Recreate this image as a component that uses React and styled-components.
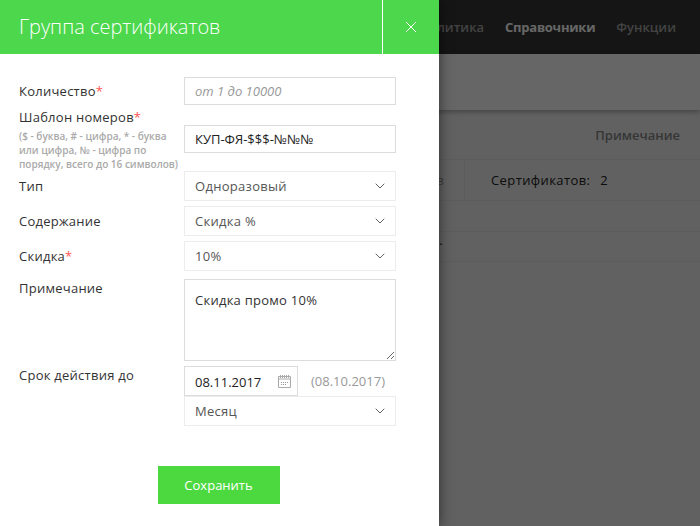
import React from "react";
import styled, { createGlobalStyle } from "styled-components";
import { ChevronDown } from "lucide-react";

const GlobalStyle = createGlobalStyle`
  html, body {
    margin: 0;
    padding: 0;
    height: 100%;
    overflow: hidden;
  }
  body {
    font-family: "Open Sans", "Liberation Sans", sans-serif;
    font-size: 13px;
    background: #fff;
  }
`;

const menu = ["Аналитика", "Справочники", "Функции"];

const Field = ({ label, required, hint, top = 0, labelTop = 0, children }) => (
  <Row $top={top}>
    <LabelBox $top={labelTop}>
      <Label>
        {label}
        {required && <Star>*</Star>}
      </Label>
      {hint && <Hint>{hint}</Hint>}
    </LabelBox>
    <Controls>{children}</Controls>
  </Row>
);

const Dropdown = ({ value, options }) => (
  <SelectWrap>
    <Select defaultValue={value}>
      {options.map(item => (
        <option key={item}>{item}</option>
      ))}
    </Select>
    <Chevron size={16} strokeWidth={1.4} />
  </SelectWrap>
);

const CalendarIcon = () => (
  <CalendarSvg width="13" height="13" viewBox="0 0 13 13">
    <path d="M.5 1.5h12v11H.5zM.5 4h12" fill="none" stroke="#aaa" />
    <path d="M2.5 0v3M4.5 0v3M6.5 0v3M8.5 0v3M10.5 0v3" fill="none" stroke="#aaa" />
    <path
      d="M3 7.5h1M5 7.5h1M7 7.5h1M9 7.5h1M3 9.5h1M5 9.5h1M7 9.5h1"
      fill="none"
      stroke="#999"
    />
  </CalendarSvg>
);

export default function App() {
  return (
    <Page>
      <GlobalStyle />
      <TopBar>
        {menu.map(item => (
          <MenuItem key={item} $active={item === "Справочники"}>
            {item}
          </MenuItem>
        ))}
      </TopBar>
      <SubBar />
      <TableHead>
        <span>Примечание</span>
      </TableHead>
      <TableRow>
        <SummaryLeft>Номиналов</SummaryLeft>
        <SummaryRight>
          Сертификатов:<b>2</b>
        </SummaryRight>
      </TableRow>
      <EmptyRow $height={30} />
      <EmptyRow $height={29}>
        <span>Скидка промо 10%.</span>
      </EmptyRow>

      <Overlay />
      <Drawer>
        <DrawerHeader>
          <Title>Группа сертификатов</Title>
          <Close aria-label="Закрыть">
            <svg width="12" height="12" viewBox="0 0 12 12">
              <path d="M1 1l10 10M11 1L1 11" stroke="#fff" strokeWidth="1" />
            </svg>
          </Close>
        </DrawerHeader>
        <Form>
          <Field label="Количество" required labelTop={5}>
            <TextInput placeholder="от 1 до 10000" />
          </Field>
          <Field
            label="Шаблон номеров"
            required
            top={3}
            hint="($ - буква, # - цифра, * - буква или цифра, № - цифра по порядку, всего до 16 символов)"
          >
            <TextInput $top={17} defaultValue="КУП-ФЯ-$$$-№№№" />
          </Field>
          <Field label="Тип" labelTop={6}>
            <Dropdown value="Одноразовый" options={["Одноразовый", "Многоразовый"]} />
          </Field>
          <Field label="Содержание" top={5} labelTop={6}>
            <Dropdown value="Скидка %" options={["Скидка %", "Сумма"]} />
          </Field>
          <Field label="Скидка" required top={5} labelTop={6}>
            <Dropdown value="10%" options={["5%", "10%", "15%"]} />
          </Field>
          <Field label="Примечание" top={8}>
            <Note defaultValue="Скидка промо 10%" />
          </Field>
          <Field label="Срок действия до" top={5}>
            <DateLine>
              <DateBox>
                <DateInput defaultValue="08.11.2017" />
                <CalendarIcon />
              </DateBox>
              <PrevDate>(08.10.2017)</PrevDate>
            </DateLine>
            <Dropdown value="Месяц" options={["Неделя", "Месяц", "Год"]} />
          </Field>
          <Actions>
            <SaveButton type="button">Сохранить</SaveButton>
          </Actions>
        </Form>
      </Drawer>
    </Page>
  );
}

const Page = styled.div`
  position: relative;
  width: 700px;
  height: 526px;
  overflow: hidden;
  background: #f3f3f3;
  color: #222;
`;

const TopBar = styled.div`
  height: 54px;
  background: #353535;
  display: flex;
  align-items: center;
  justify-content: flex-end;
  gap: 21px;
  padding-right: 24px;
`;

const MenuItem = styled.span`
  color: ${p => (p.$active ? "#fff" : "#a8a8a8")};
  font-weight: ${p => (p.$active ? 700 : 600)};
  font-size: 13px;
  letter-spacing: ${p => (p.$active ? "-0.25px" : "0")};
`;

const SubBar = styled.div`
  height: 56px;
  background: #fff;
  box-shadow: 0 2px 5px rgba(0, 0, 0, 0.3);
  position: relative;
`;

const TableHead = styled.div`
  height: 50px;
  display: flex;
  align-items: center;
  justify-content: flex-end;
  padding-right: 20px;
  border-bottom: 1px solid #e6e6e6;
  font-weight: 600;
  color: #888;
  box-sizing: border-box;
`;

const TableRow = styled.div`
  height: 40px;
  display: flex;
  border-bottom: 1px solid #e6e6e6;
`;

const SummaryLeft = styled.div`
  width: 465px;
  box-sizing: border-box;
  border-right: 1px solid #e6e6e6;
  text-align: right;
  line-height: 40px;
  padding-right: 20px;
  color: #999;
`;

const SummaryRight = styled.div`
  padding-left: 26px;
  line-height: 40px;
  color: #222;
  letter-spacing: 0.4px;

  b {
    font-weight: 400;
    margin-left: 10px;
  }
`;

const EmptyRow = styled.div`
  height: ${p => p.$height}px;
  line-height: 16px;
  border-bottom: 1px solid #e6e6e6;
  padding-left: 321px;
`;

const Overlay = styled.div`
  position: absolute;
  inset: 0;
  background: rgba(0, 0, 0, 0.6);
`;

const Drawer = styled.div`
  position: absolute;
  top: 0;
  left: 0;
  bottom: 0;
  width: 439px;
  background: #fff;
  box-shadow: 0 0 12px rgba(0, 0, 0, 0.55);
`;

const DrawerHeader = styled.div`
  height: 54px;
  background: #4cd74c;
  display: flex;
  align-items: stretch;
  justify-content: space-between;
`;

const Title = styled.h1`
  margin: 0;
  padding-left: 19px;
  font-size: 20px;
  font-weight: 300;
  line-height: 53px;
  color: #fff;
`;

const Close = styled.button`
  width: 57px;
  padding: 0;
  background: none;
  border: none;
  border-left: 1px solid #fff;
  display: flex;
  align-items: center;
  justify-content: center;
  cursor: pointer;
`;

const Form = styled.form`
  padding: 23px 43px 0 19px;
`;

const Row = styled.div`
  display: grid;
  grid-template-columns: 165px 212px;
  margin-top: ${p => p.$top}px;
`;

const LabelBox = styled.div`
  padding-top: ${p => p.$top}px;
`;

const Label = styled.label`
  display: block;
  line-height: 18px;
  color: #333;
  letter-spacing: 0.25px;
`;

const Star = styled.span`
  color: #f55;
`;

const Hint = styled.div`
  margin-top: 3px;
  font-size: 10px;
  font-weight: 600;
  line-height: 14px;
  color: #aaa;
  width: 162px;
`;

const Controls = styled.div`
  display: flex;
  flex-direction: column;
`;

const TextInput = styled.input`
  box-sizing: border-box;
  width: 212px;
  height: 28px;
  margin-top: ${p => p.$top || 0}px;
  padding: 0 10px;
  border: 1px solid #dcdcdc;
  outline: none;
  font: inherit;
  color: #222;

  &::placeholder {
    color: #999;
    font-style: italic;
    opacity: 1;
  }
`;

const SelectWrap = styled.div`
  position: relative;
  width: 212px;
`;

const Select = styled.select`
  display: block;
  box-sizing: border-box;
  width: 100%;
  height: 30px;
  padding: 0 10px;
  appearance: none;
  background: #fff;
  border: 1px solid #ececec;
  border-radius: 0;
  outline: none;
  font: inherit;
  letter-spacing: 0.3px;
  color: #555;
`;

const Chevron = styled(ChevronDown)`
  position: absolute;
  top: 7px;
  right: 8px;
  color: #555;
  pointer-events: none;
`;

const Note = styled.textarea`
  display: block;
  box-sizing: border-box;
  width: 212px;
  height: 82px;
  padding: 11px 10px;
  border: 1px solid #dcdcdc;
  border-radius: 0;
  outline: none;
  font: inherit;
  line-height: 18px;
  letter-spacing: 0.25px;
  color: #333;
`;

const DateLine = styled.div`
  display: flex;
  align-items: center;
`;

const DateBox = styled.div`
  box-sizing: border-box;
  width: 114px;
  height: 30px;
  display: flex;
  align-items: center;
  padding: 1px 6px 0 10px;
  border: 1px solid #dcdcdc;
`;

const DateInput = styled.input`
  width: 76px;
  padding: 0;
  border: none;
  outline: none;
  font: inherit;
  font-weight: 500;
  color: #222;
`;

const CalendarSvg = styled.svg`
  flex: none;
  margin-left: auto;
`;

const PrevDate = styled.span`
  margin-left: 13px;
  color: #999;
`;

const Actions = styled.div`
  display: flex;
  justify-content: center;
  margin-top: 40px;
  padding-left: 22px;
`;

const SaveButton = styled.button`
  width: 122px;
  height: 38px;
  background: #4cd940;
  border: none;
  color: #fff;
  font: inherit;
  font-weight: 500;
  cursor: pointer;
`;
